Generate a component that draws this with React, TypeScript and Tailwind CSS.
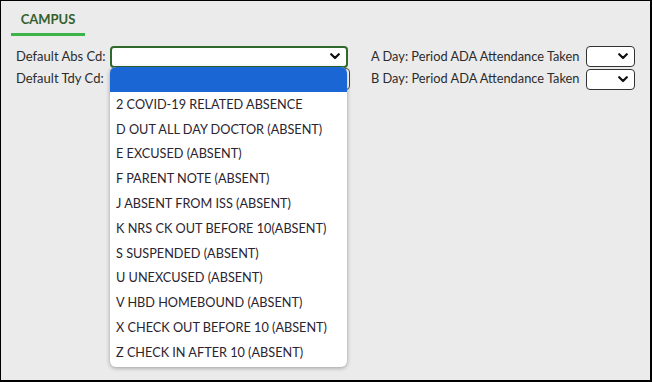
import React from 'react';

const options = [
  '2 COVID-19 RELATED ABSENCE',
  'D OUT ALL DAY DOCTOR (ABSENT)',
  'E EXCUSED (ABSENT)',
  'F PARENT NOTE (ABSENT)',
  'J ABSENT FROM ISS (ABSENT)',
  'K NRS CK OUT BEFORE 10(ABSENT)',
  'S SUSPENDED (ABSENT)',
  'U UNEXCUSED (ABSENT)',
  'V HBD HOMEBOUND (ABSENT)',
  'X CHECK OUT BEFORE 10 (ABSENT)',
  'Z CHECK IN AFTER 10 (ABSENT)',
];

const Chevron = () => (
  <svg width="10" height="7" viewBox="0 0 10 7" className="shrink-0">
    <path d="M1.2 1.2 L5 5 L8.8 1.2" fill="none" stroke="#111" strokeWidth="2.2" strokeLinecap="round" strokeLinejoin="round" />
  </svg>
);

const SelectBox = ({ className }: { className: string }) => (
  <div className={`flex items-center justify-end bg-white rounded-[4px] pr-[6px] ${className}`}>
    <Chevron />
  </div>
);

export default function App() {
  return (
    <div
      className="w-[652px] h-[382px] bg-[#ebebeb] border-t border-l border-r-2 border-b-2 border-black text-[#2b2b2b] text-[13px] relative overflow-hidden"
      style={{ fontFamily: 'Lato, "Open Sans", sans-serif' }}
    >
      {/* Tab */}
      <div className="pl-[10px] pt-[10px]">
        <div className="w-[74px] flex flex-col items-center">
          <span className="font-bold text-[13px] text-[#345f2c] leading-[16px]">CAMPUS</span>
          <div className="mt-[6px] h-[3px] w-full bg-[#3db44a]" />
        </div>
      </div>

      {/* Fields */}
      <div className="flex pt-[10px] pl-[15px]">
        <div className="flex flex-col gap-[1px]">
          <div className="flex items-center h-[21px]">
            <span className="w-[94px]">Default Abs Cd:</span>
            <SelectBox className="w-[238px] h-[22px] border-2 border-[#2f6a2c]" />
          </div>
          <div className="flex items-center h-[22px]">
            <span className="w-[94px]">Default Tdy Cd:</span>
            <SelectBox className="w-[240px] h-[22px] border border-[#444]" />
          </div>
        </div>

        <div className="flex flex-col gap-[1px] ml-[21px]">
          <div className="flex items-center h-[21px]">
            <span className="w-[215px] text-[12.8px]">A Day: Period ADA Attendance Taken</span>
            <SelectBox className="w-[49px] h-[21px] border border-[#333]" />
          </div>
          <div className="flex items-center h-[22px]">
            <span className="w-[215px] text-[12.8px]">B Day: Period ADA Attendance Taken</span>
            <SelectBox className="w-[49px] h-[21px] border border-[#333]" />
          </div>
        </div>
      </div>

      {/* Open dropdown list */}
      <div className="absolute left-[109px] top-[66px] w-[237px] bg-white rounded-[6px] shadow-[0_1px_4px_rgba(0,0,0,0.35)] overflow-hidden">
        <div className="h-[25px] bg-[#1a66d4]" />
        {options.map((o) => (
          <div key={o} className="h-[24.8px] flex items-center pl-[6px] text-[12.7px] text-[#2b2430]">
            {o}
          </div>
        ))}
        <div className="h-[2px]" />
      </div>
    </div>
  );
}
